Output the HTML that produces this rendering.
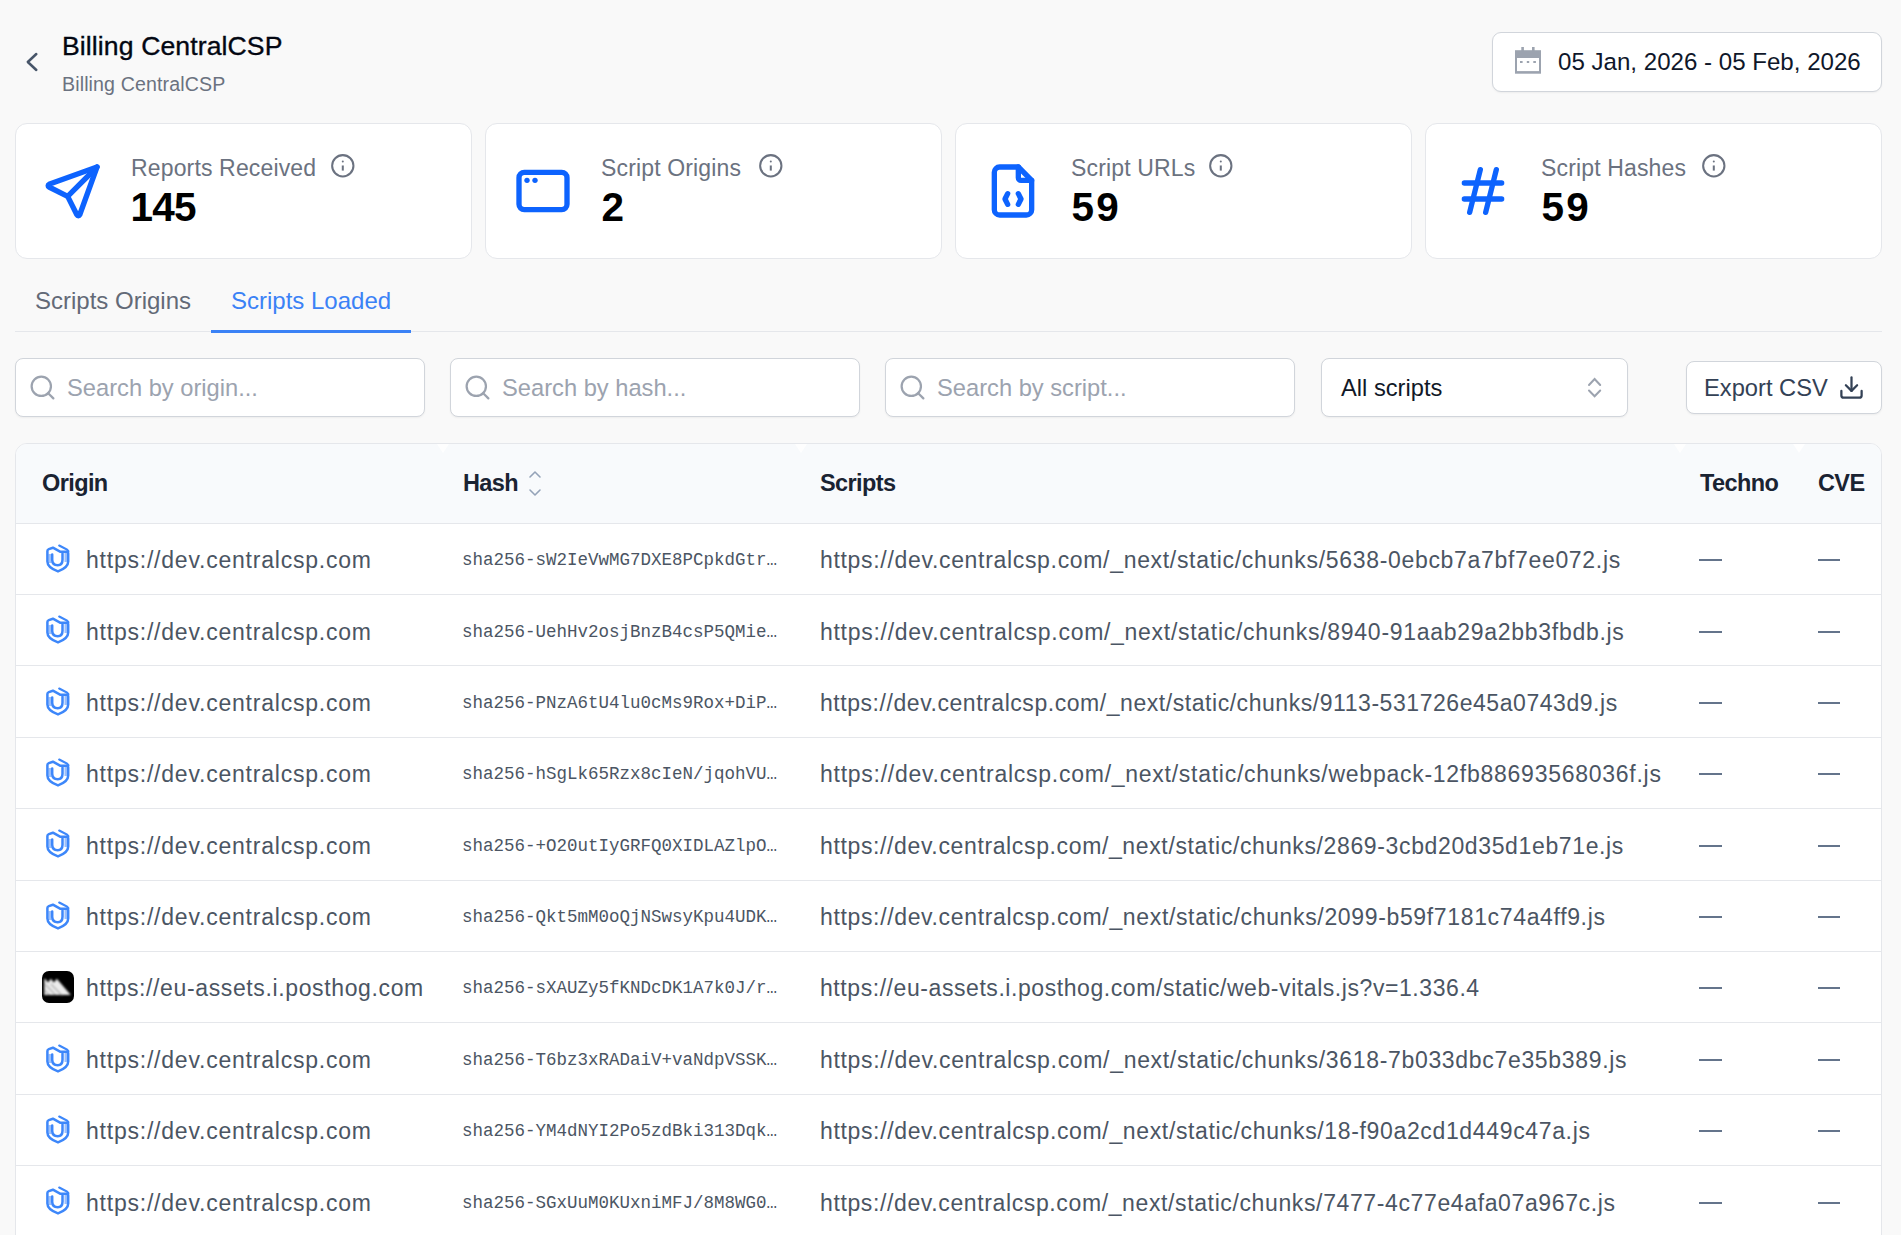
<!DOCTYPE html>
<html><head><meta charset="utf-8">
<style>
*{box-sizing:border-box;margin:0;padding:0}
html,body{width:1901px;height:1235px;overflow:hidden;background:#f9f9f9;font-family:"Liberation Sans",sans-serif;position:relative}
.a{position:absolute;white-space:nowrap;line-height:1}
svg{position:absolute;overflow:visible}
.card{position:absolute;top:123px;width:457px;height:136px;background:#fff;border:1px solid #e5e7eb;border-radius:12px}
.lbl{position:absolute;left:115px;top:33px;font-size:23px;letter-spacing:0.15px;color:#6b7280;line-height:1}
.num{position:absolute;left:114.5px;top:62.5px;font-size:40.5px;letter-spacing:-0.8px;font-weight:bold;color:#000;line-height:1}
.inp{position:absolute;top:358px;height:59px;background:#fff;border:1px solid #d1d5db;border-radius:8px;box-shadow:0 1px 2px rgba(0,0,0,0.05)}
.ph{position:absolute;left:51px;top:18px;font-size:23.7px;color:#9ca3af;line-height:1}
.row{position:absolute;left:15px;width:1867px;height:71px}
.hl{position:absolute;left:16px;width:1865px;height:1px;background:#e5e7eb}
.row .org{position:absolute;left:71px;top:24px;font-size:23px;letter-spacing:0.78px;color:#4b5563;line-height:1;white-space:nowrap}
.row .hash{position:absolute;left:447px;top:27px;font-size:17.5px;font-family:"Liberation Mono",monospace;color:#4b5563;line-height:1;white-space:nowrap}
.row .scr{position:absolute;left:805px;top:24px;font-size:23px;letter-spacing:0.67px;color:#4b5563;line-height:1;white-space:nowrap}
.row .dash{position:absolute;top:34px;width:22.5px;height:2px;background:#64748b}
.row .shd{position:absolute;left:25px;top:14.7px}
.row .phg{position:absolute;left:27px;top:17.5px;width:32px;height:32px;background:#000;border-radius:7px;overflow:hidden}
.row .phg svg{position:absolute;left:0;top:0}
.th{position:absolute;top:28px;font-size:23.5px;font-weight:bold;letter-spacing:-0.6px;color:#1a2332;line-height:1;white-space:nowrap}
</style></head><body>

<svg width="0" height="0" style="position:absolute"><defs><filter id="bl" x="-20%" y="-20%" width="140%" height="140%"><feGaussianBlur stdDeviation="0.75"/></filter><filter id="bl2" x="-20%" y="-20%" width="140%" height="140%"><feGaussianBlur stdDeviation="0.8"/></filter></defs></svg>
<!-- header -->
<svg style="left:0;top:0" width="1" height="1"><path d="M36.3 54 L27.8 62 L36.3 70" fill="none" stroke="#475569" stroke-width="2.5" stroke-linecap="round" stroke-linejoin="round"/></svg>
<div class="a" style="left:62px;top:33px;font-size:26.6px;letter-spacing:0.1px;color:#030712;-webkit-text-stroke:0.35px #030712">Billing CentralCSP</div>
<div class="a" style="left:62px;top:75px;font-size:19.6px;letter-spacing:0.12px;color:#6b7280">Billing CentralCSP</div>

<div style="position:absolute;left:1492px;top:32px;width:390px;height:60px;background:#fff;border:1px solid #d1d5db;border-radius:9px;box-shadow:0 1px 2px rgba(0,0,0,0.05)"></div>
<svg style="left:0;top:0" width="1" height="1" fill="#9ca3af">
<rect x="1515" y="50.2" width="26" height="23.5"/>
<rect x="1521.3" y="47" width="2.6" height="4"/>
<rect x="1532" y="47" width="2.6" height="4"/>
<rect x="1517" y="58" width="22" height="13.1" fill="#fff"/>
<rect x="1520" y="61" width="2.6" height="2"/>
<rect x="1526.8" y="61" width="2.4" height="2"/>
<rect x="1533.3" y="61" width="2.6" height="2"/>
</svg>
<div class="a" style="left:1558px;top:50px;font-size:24.1px;color:#0f172a">05 Jan, 2026 - 05 Feb, 2026</div>

<!-- stat cards -->
<div class="card" style="left:15px">
  <svg style="left:25.3px;top:35px" width="64" height="64" viewBox="0 0 24 24" fill="none" stroke="#0d63fe" stroke-width="2" stroke-linecap="round" stroke-linejoin="round"><path d="M10 14l11 -11"/><path d="M21 3l-6.5 18a.55 .55 0 0 1 -1 0l-3.5 -7l-7 -3.5a.55 .55 0 0 1 0 -1l18 -6.5"/></svg>
  <div class="lbl">Reports Received</div>
  <svg style="left:313.8px;top:29.2px" width="25.6" height="25.6" viewBox="0 0 24 24" fill="none" stroke="#6b7280" stroke-width="1.9" stroke-linecap="round" stroke-linejoin="round"><circle cx="12" cy="12" r="10"/><path d="M12 16.5v-4.8" stroke-linecap="butt"/><path d="M12 8h.01"/></svg>
  <div class="num">145</div>
</div>
<div class="card" style="left:485px">
  <svg style="left:25.3px;top:35px" width="64" height="64" viewBox="0 0 24 24" fill="none" stroke="#0d63fe" stroke-width="2" stroke-linecap="round" stroke-linejoin="round"><path d="M3 5m0 2a2 2 0 0 1 2 -2h14a2 2 0 0 1 2 2v10a2 2 0 0 1 -2 2h-14a2 2 0 0 1 -2 -2z"/><path d="M6 8h.01"/><path d="M9 8h.01"/></svg>
  <div class="lbl">Script Origins</div>
  <svg style="left:271.8px;top:29.2px" width="25.6" height="25.6" viewBox="0 0 24 24" fill="none" stroke="#6b7280" stroke-width="1.9" stroke-linecap="round" stroke-linejoin="round"><circle cx="12" cy="12" r="10"/><path d="M12 16.5v-4.8" stroke-linecap="butt"/><path d="M12 8h.01"/></svg>
  <div class="num" style="left:115.5px">2</div>
</div>
<div class="card" style="left:955px">
  <svg style="left:25.3px;top:35px" width="64" height="64" viewBox="0 0 24 24" fill="none" stroke="#0d63fe" stroke-width="2" stroke-linecap="round" stroke-linejoin="round"><path d="M14 3v4a1 1 0 0 0 1 1h4"/><path d="M17 21h-10a2 2 0 0 1 -2 -2v-14a2 2 0 0 1 2 -2h7l5 5v11a2 2 0 0 1 -2 2z"/><path d="M10 13l-1 2l1 2"/><path d="M14 13l1 2l-1 2"/></svg>
  <div class="lbl">Script URLs</div>
  <svg style="left:251.8px;top:29.2px" width="25.6" height="25.6" viewBox="0 0 24 24" fill="none" stroke="#6b7280" stroke-width="1.9" stroke-linecap="round" stroke-linejoin="round"><circle cx="12" cy="12" r="10"/><path d="M12 16.5v-4.8" stroke-linecap="butt"/><path d="M12 8h.01"/></svg>
  <div class="num" style="left:115.5px;letter-spacing:2.2px">59</div>
</div>
<div class="card" style="left:1425px">
  <svg style="left:25.3px;top:35px" width="64" height="64" viewBox="0 0 24 24" fill="none" stroke="#0d63fe" stroke-width="2" stroke-linecap="round" stroke-linejoin="round"><path d="M5 9l14 0"/><path d="M5 15l14 0"/><path d="M11 4l-4 16"/><path d="M17 4l-4 16"/></svg>
  <div class="lbl">Script Hashes</div>
  <svg style="left:274.8px;top:29.2px" width="25.6" height="25.6" viewBox="0 0 24 24" fill="none" stroke="#6b7280" stroke-width="1.9" stroke-linecap="round" stroke-linejoin="round"><circle cx="12" cy="12" r="10"/><path d="M12 16.5v-4.8" stroke-linecap="butt"/><path d="M12 8h.01"/></svg>
  <div class="num" style="left:115.5px;letter-spacing:2.2px">59</div>
</div>

<!-- tabs -->
<div style="position:absolute;left:15px;top:331px;width:1867px;height:1px;background:#e5e7eb"></div>
<div class="a" style="left:35px;top:289px;font-size:24px;color:#636a77">Scripts Origins</div>
<div class="a" style="left:231px;top:289px;font-size:24px;color:#3b82f6">Scripts Loaded</div>
<div style="position:absolute;left:211px;top:330px;width:200px;height:3px;background:#3b82f6"></div>

<!-- filters -->
<div class="inp" style="left:15px;width:410px">
  <svg style="left:11.7px;top:13.8px" width="29" height="29" viewBox="0 0 24 24" fill="none" stroke="#9ca3af" stroke-width="1.85" stroke-linecap="round" stroke-linejoin="round"><circle cx="11" cy="11" r="8"/><path d="m21 21-4.3-4.3"/></svg>
  <div class="ph">Search by origin...</div>
</div>
<div class="inp" style="left:450px;width:410px">
  <svg style="left:11.7px;top:13.8px" width="29" height="29" viewBox="0 0 24 24" fill="none" stroke="#9ca3af" stroke-width="1.85" stroke-linecap="round" stroke-linejoin="round"><circle cx="11" cy="11" r="8"/><path d="m21 21-4.3-4.3"/></svg>
  <div class="ph">Search by hash...</div>
</div>
<div class="inp" style="left:885px;width:410px">
  <svg style="left:11.7px;top:13.8px" width="29" height="29" viewBox="0 0 24 24" fill="none" stroke="#9ca3af" stroke-width="1.85" stroke-linecap="round" stroke-linejoin="round"><circle cx="11" cy="11" r="8"/><path d="m21 21-4.3-4.3"/></svg>
  <div class="ph">Search by script...</div>
</div>
<div class="inp" style="left:1321px;width:307px">
  <div class="ph" style="left:19px;color:#111827">All scripts</div>
  <svg style="left:-1322px;top:-359px" width="1" height="1" fill="none" stroke="#9ca3af" stroke-width="2" stroke-linecap="round" stroke-linejoin="miter"><path d="M1589 385 L1594.6 379 L1600.2 385"/><path d="M1589 390.5 L1594.6 396.2 L1600.2 390.5"/></svg>
</div>
<div class="inp" style="left:1686px;top:361px;width:196px;height:53px">
  <div class="ph" style="left:17px;top:15px;color:#334155">Export CSV</div>
  <svg style="left:151.3px;top:12.2px" width="27" height="27" viewBox="0 0 24 24" fill="none" stroke="#334155" stroke-width="2" stroke-linecap="round" stroke-linejoin="round"><path d="M21 15v4a2 2 0 0 1-2 2H5a2 2 0 0 1-2-2v-4"/><path d="m7 10 5 5 5-5"/><path d="M12 15V3"/></svg>
</div>

<!-- table -->
<div id="tbl" style="position:absolute;left:15px;top:443px;width:1867px;height:820px;background:#fff;border:1px solid #e5e7eb;border-radius:12px;overflow:hidden">
  <div style="position:absolute;left:0;top:0;width:100%;height:80px;background:#f8fafc;border-bottom:1px solid #e5e7eb"></div>
  <div style="position:absolute;left:420.7px;top:0;width:0;height:0;border-left:6px solid transparent;border-right:6px solid transparent;border-top:9px solid #fff;opacity:0.9;filter:blur(0.6px)"></div><div style="position:absolute;left:778.8px;top:0;width:0;height:0;border-left:6px solid transparent;border-right:6px solid transparent;border-top:9px solid #fff;opacity:0.9;filter:blur(0.6px)"></div><div style="position:absolute;left:1658px;top:0;width:0;height:0;border-left:6px solid transparent;border-right:6px solid transparent;border-top:9px solid #fff;opacity:0.9;filter:blur(0.6px)"></div><div style="position:absolute;left:1776.8px;top:0;width:0;height:0;border-left:6px solid transparent;border-right:6px solid transparent;border-top:9px solid #fff;opacity:0.9;filter:blur(0.6px)"></div>
  <div class="th" style="left:26px">Origin</div>
  <div class="th" style="left:447px">Hash</div>
  <svg style="left:512px;top:26px" width="14" height="28" viewBox="0 0 14 28" fill="none" stroke="#94a3b8" stroke-width="1.6" stroke-linecap="round" stroke-linejoin="round"><path d="M2 7 L7 2 L12 7"/><path d="M2 20 L7 25 L12 20"/></svg>
  <div class="th" style="left:804px">Scripts</div>
  <div class="th" style="left:1684px">Techno</div>
  <div class="th" style="left:1802px">CVE</div>
</div>
<div id="rows">
<div class="row" style="top:525.20px"><svg class="shd" width="36" height="38" viewBox="0 0 36 38"><g filter="url(#bl)"><rect x="8.5" y="14" width="3" height="9" fill="#9cc0fb"/><rect x="24.5" y="13" width="3" height="9" fill="#9cc0fb"/><path d="M7.4 11 Q7.4 9.6 8.8 9.1 L12.9 7.7 L20.5 11.8 L26.6 11.8 Q28.2 12 28.2 13.6 V21.5 Q28.2 27.6 18 31.4 Q7.4 27.6 7.4 21.5 Z" fill="none" stroke="#3d87fa" stroke-width="2.5" stroke-linejoin="round"/><path d="M19.2 5.6 L27 9.6 L28.4 11.2" fill="none" stroke="#3d87fa" stroke-width="2.2" stroke-linecap="round"/><path d="M12.2 14.5 V19.8 Q12.2 25.2 17.7 25.2 Q22.5 25.2 22.5 19.8 V13.4" fill="none" stroke="#3d87fa" stroke-width="2.5" stroke-linecap="round"/></g></svg><div class="org">https://dev.centralcsp.com</div><div class="hash">sha256-sW2IeVwMG7DXE8PCpkdGtr…</div><div class="scr" style="letter-spacing:0.679px">https://dev.centralcsp.com/_next/static/chunks/5638-0ebcb7a7bf7ee072.js</div><div class="dash" style="left:1684px"></div><div class="dash" style="left:1802.5px"></div></div>
<div class="row" style="top:596.58px"><svg class="shd" width="36" height="38" viewBox="0 0 36 38"><g filter="url(#bl)"><rect x="8.5" y="14" width="3" height="9" fill="#9cc0fb"/><rect x="24.5" y="13" width="3" height="9" fill="#9cc0fb"/><path d="M7.4 11 Q7.4 9.6 8.8 9.1 L12.9 7.7 L20.5 11.8 L26.6 11.8 Q28.2 12 28.2 13.6 V21.5 Q28.2 27.6 18 31.4 Q7.4 27.6 7.4 21.5 Z" fill="none" stroke="#3d87fa" stroke-width="2.5" stroke-linejoin="round"/><path d="M19.2 5.6 L27 9.6 L28.4 11.2" fill="none" stroke="#3d87fa" stroke-width="2.2" stroke-linecap="round"/><path d="M12.2 14.5 V19.8 Q12.2 25.2 17.7 25.2 Q22.5 25.2 22.5 19.8 V13.4" fill="none" stroke="#3d87fa" stroke-width="2.5" stroke-linecap="round"/></g></svg><div class="org">https://dev.centralcsp.com</div><div class="hash">sha256-UehHv2osjBnzB4csP5QMie…</div><div class="scr" style="letter-spacing:0.713px">https://dev.centralcsp.com/_next/static/chunks/8940-91aab29a2bb3fbdb.js</div><div class="dash" style="left:1684px"></div><div class="dash" style="left:1802.5px"></div></div>
<div class="row" style="top:667.96px"><svg class="shd" width="36" height="38" viewBox="0 0 36 38"><g filter="url(#bl)"><rect x="8.5" y="14" width="3" height="9" fill="#9cc0fb"/><rect x="24.5" y="13" width="3" height="9" fill="#9cc0fb"/><path d="M7.4 11 Q7.4 9.6 8.8 9.1 L12.9 7.7 L20.5 11.8 L26.6 11.8 Q28.2 12 28.2 13.6 V21.5 Q28.2 27.6 18 31.4 Q7.4 27.6 7.4 21.5 Z" fill="none" stroke="#3d87fa" stroke-width="2.5" stroke-linejoin="round"/><path d="M19.2 5.6 L27 9.6 L28.4 11.2" fill="none" stroke="#3d87fa" stroke-width="2.2" stroke-linecap="round"/><path d="M12.2 14.5 V19.8 Q12.2 25.2 17.7 25.2 Q22.5 25.2 22.5 19.8 V13.4" fill="none" stroke="#3d87fa" stroke-width="2.5" stroke-linecap="round"/></g></svg><div class="org">https://dev.centralcsp.com</div><div class="hash">sha256-PNzA6tU4lu0cMs9Rox+DiP…</div><div class="scr" style="letter-spacing:0.551px">https://dev.centralcsp.com/_next/static/chunks/9113-531726e45a0743d9.js</div><div class="dash" style="left:1684px"></div><div class="dash" style="left:1802.5px"></div></div>
<div class="row" style="top:739.34px"><svg class="shd" width="36" height="38" viewBox="0 0 36 38"><g filter="url(#bl)"><rect x="8.5" y="14" width="3" height="9" fill="#9cc0fb"/><rect x="24.5" y="13" width="3" height="9" fill="#9cc0fb"/><path d="M7.4 11 Q7.4 9.6 8.8 9.1 L12.9 7.7 L20.5 11.8 L26.6 11.8 Q28.2 12 28.2 13.6 V21.5 Q28.2 27.6 18 31.4 Q7.4 27.6 7.4 21.5 Z" fill="none" stroke="#3d87fa" stroke-width="2.5" stroke-linejoin="round"/><path d="M19.2 5.6 L27 9.6 L28.4 11.2" fill="none" stroke="#3d87fa" stroke-width="2.2" stroke-linecap="round"/><path d="M12.2 14.5 V19.8 Q12.2 25.2 17.7 25.2 Q22.5 25.2 22.5 19.8 V13.4" fill="none" stroke="#3d87fa" stroke-width="2.5" stroke-linecap="round"/></g></svg><div class="org">https://dev.centralcsp.com</div><div class="hash">sha256-hSgLk65Rzx8cIeN/jqohVU…</div><div class="scr" style="letter-spacing:0.737px">https://dev.centralcsp.com/_next/static/chunks/webpack-12fb88693568036f.js</div><div class="dash" style="left:1684px"></div><div class="dash" style="left:1802.5px"></div></div>
<div class="row" style="top:810.72px"><svg class="shd" width="36" height="38" viewBox="0 0 36 38"><g filter="url(#bl)"><rect x="8.5" y="14" width="3" height="9" fill="#9cc0fb"/><rect x="24.5" y="13" width="3" height="9" fill="#9cc0fb"/><path d="M7.4 11 Q7.4 9.6 8.8 9.1 L12.9 7.7 L20.5 11.8 L26.6 11.8 Q28.2 12 28.2 13.6 V21.5 Q28.2 27.6 18 31.4 Q7.4 27.6 7.4 21.5 Z" fill="none" stroke="#3d87fa" stroke-width="2.5" stroke-linejoin="round"/><path d="M19.2 5.6 L27 9.6 L28.4 11.2" fill="none" stroke="#3d87fa" stroke-width="2.2" stroke-linecap="round"/><path d="M12.2 14.5 V19.8 Q12.2 25.2 17.7 25.2 Q22.5 25.2 22.5 19.8 V13.4" fill="none" stroke="#3d87fa" stroke-width="2.5" stroke-linecap="round"/></g></svg><div class="org">https://dev.centralcsp.com</div><div class="hash">sha256-+O20utIyGRFQ0XIDLAZlpO…</div><div class="scr" style="letter-spacing:0.633px">https://dev.centralcsp.com/_next/static/chunks/2869-3cbd20d35d1eb71e.js</div><div class="dash" style="left:1684px"></div><div class="dash" style="left:1802.5px"></div></div>
<div class="row" style="top:882.10px"><svg class="shd" width="36" height="38" viewBox="0 0 36 38"><g filter="url(#bl)"><rect x="8.5" y="14" width="3" height="9" fill="#9cc0fb"/><rect x="24.5" y="13" width="3" height="9" fill="#9cc0fb"/><path d="M7.4 11 Q7.4 9.6 8.8 9.1 L12.9 7.7 L20.5 11.8 L26.6 11.8 Q28.2 12 28.2 13.6 V21.5 Q28.2 27.6 18 31.4 Q7.4 27.6 7.4 21.5 Z" fill="none" stroke="#3d87fa" stroke-width="2.5" stroke-linejoin="round"/><path d="M19.2 5.6 L27 9.6 L28.4 11.2" fill="none" stroke="#3d87fa" stroke-width="2.2" stroke-linecap="round"/><path d="M12.2 14.5 V19.8 Q12.2 25.2 17.7 25.2 Q22.5 25.2 22.5 19.8 V13.4" fill="none" stroke="#3d87fa" stroke-width="2.5" stroke-linecap="round"/></g></svg><div class="org">https://dev.centralcsp.com</div><div class="hash">sha256-Qkt5mM0oQjNSwsyKpu4UDK…</div><div class="scr" style="letter-spacing:0.65px">https://dev.centralcsp.com/_next/static/chunks/2099-b59f7181c74a4ff9.js</div><div class="dash" style="left:1684px"></div><div class="dash" style="left:1802.5px"></div></div>
<div class="row" style="top:953.48px"><div class="phg"><svg width="32" height="32" viewBox="0 0 32 32"><g filter="url(#bl2)"><path d="M2.3 24 V8.2 L3.2 7.8 L6 11.6 L8.9 7.8 L11.9 11.6 L14.8 7.8 L28.8 24 Z" fill="#ececec"/><path d="M3.5 13.5 L13.5 24 M9 13 L20 24.5 M3 19.5 L7.5 24" stroke="#8a8a8a" stroke-width="1.1" opacity="0.7"/></g></svg></div><div class="org" style="letter-spacing:0.63px">https://eu-assets.i.posthog.com</div><div class="hash">sha256-sXAUZy5fKNDcDK1A7k0J/r…</div><div class="scr" style="letter-spacing:0.568px">https://eu-assets.i.posthog.com/static/web-vitals.js?v=1.336.4</div><div class="dash" style="left:1684px"></div><div class="dash" style="left:1802.5px"></div></div>
<div class="row" style="top:1024.86px"><svg class="shd" width="36" height="38" viewBox="0 0 36 38"><g filter="url(#bl)"><rect x="8.5" y="14" width="3" height="9" fill="#9cc0fb"/><rect x="24.5" y="13" width="3" height="9" fill="#9cc0fb"/><path d="M7.4 11 Q7.4 9.6 8.8 9.1 L12.9 7.7 L20.5 11.8 L26.6 11.8 Q28.2 12 28.2 13.6 V21.5 Q28.2 27.6 18 31.4 Q7.4 27.6 7.4 21.5 Z" fill="none" stroke="#3d87fa" stroke-width="2.5" stroke-linejoin="round"/><path d="M19.2 5.6 L27 9.6 L28.4 11.2" fill="none" stroke="#3d87fa" stroke-width="2.2" stroke-linecap="round"/><path d="M12.2 14.5 V19.8 Q12.2 25.2 17.7 25.2 Q22.5 25.2 22.5 19.8 V13.4" fill="none" stroke="#3d87fa" stroke-width="2.5" stroke-linecap="round"/></g></svg><div class="org">https://dev.centralcsp.com</div><div class="hash">sha256-T6bz3xRADaiV+vaNdpVSSK…</div><div class="scr" style="letter-spacing:0.679px">https://dev.centralcsp.com/_next/static/chunks/3618-7b033dbc7e35b389.js</div><div class="dash" style="left:1684px"></div><div class="dash" style="left:1802.5px"></div></div>
<div class="row" style="top:1096.24px"><svg class="shd" width="36" height="38" viewBox="0 0 36 38"><g filter="url(#bl)"><rect x="8.5" y="14" width="3" height="9" fill="#9cc0fb"/><rect x="24.5" y="13" width="3" height="9" fill="#9cc0fb"/><path d="M7.4 11 Q7.4 9.6 8.8 9.1 L12.9 7.7 L20.5 11.8 L26.6 11.8 Q28.2 12 28.2 13.6 V21.5 Q28.2 27.6 18 31.4 Q7.4 27.6 7.4 21.5 Z" fill="none" stroke="#3d87fa" stroke-width="2.5" stroke-linejoin="round"/><path d="M19.2 5.6 L27 9.6 L28.4 11.2" fill="none" stroke="#3d87fa" stroke-width="2.2" stroke-linecap="round"/><path d="M12.2 14.5 V19.8 Q12.2 25.2 17.7 25.2 Q22.5 25.2 22.5 19.8 V13.4" fill="none" stroke="#3d87fa" stroke-width="2.5" stroke-linecap="round"/></g></svg><div class="org">https://dev.centralcsp.com</div><div class="hash">sha256-YM4dNYI2Po5zdBki313Dqk…</div><div class="scr" style="letter-spacing:0.649px">https://dev.centralcsp.com/_next/static/chunks/18-f90a2cd1d449c47a.js</div><div class="dash" style="left:1684px"></div><div class="dash" style="left:1802.5px"></div></div>
<div class="row" style="top:1167.62px"><svg class="shd" width="36" height="38" viewBox="0 0 36 38"><g filter="url(#bl)"><rect x="8.5" y="14" width="3" height="9" fill="#9cc0fb"/><rect x="24.5" y="13" width="3" height="9" fill="#9cc0fb"/><path d="M7.4 11 Q7.4 9.6 8.8 9.1 L12.9 7.7 L20.5 11.8 L26.6 11.8 Q28.2 12 28.2 13.6 V21.5 Q28.2 27.6 18 31.4 Q7.4 27.6 7.4 21.5 Z" fill="none" stroke="#3d87fa" stroke-width="2.5" stroke-linejoin="round"/><path d="M19.2 5.6 L27 9.6 L28.4 11.2" fill="none" stroke="#3d87fa" stroke-width="2.2" stroke-linecap="round"/><path d="M12.2 14.5 V19.8 Q12.2 25.2 17.7 25.2 Q22.5 25.2 22.5 19.8 V13.4" fill="none" stroke="#3d87fa" stroke-width="2.5" stroke-linecap="round"/></g></svg><div class="org">https://dev.centralcsp.com</div><div class="hash">sha256-SGxUuM0KUxniMFJ/8M8WG0…</div><div class="scr" style="letter-spacing:0.623px">https://dev.centralcsp.com/_next/static/chunks/7477-4c77e4afa07a967c.js</div><div class="dash" style="left:1684px"></div><div class="dash" style="left:1802.5px"></div></div>
<div class="hl" style="top:594px"></div>
<div class="hl" style="top:665px"></div>
<div class="hl" style="top:737px"></div>
<div class="hl" style="top:808px"></div>
<div class="hl" style="top:880px"></div>
<div class="hl" style="top:951px"></div>
<div class="hl" style="top:1022px"></div>
<div class="hl" style="top:1094px"></div>
<div class="hl" style="top:1165px"></div>
</div><!--/rows-->

</body></html>
